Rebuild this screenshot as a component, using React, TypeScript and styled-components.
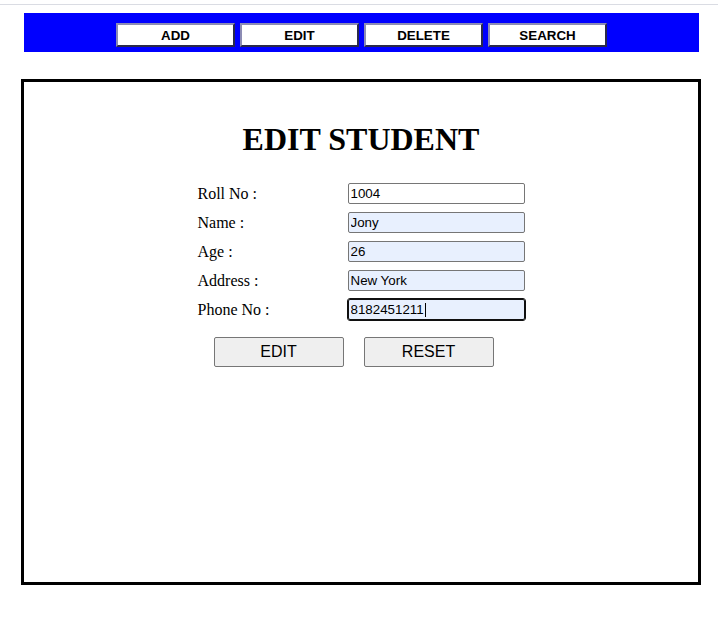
import React from "react";
import styled, { createGlobalStyle } from "styled-components";

const Global = createGlobalStyle`
  html, body { margin: 0; padding: 0; background: #ffffff; }
  body { font-family: "Liberation Serif", "Times New Roman", serif; }
`;

const Page = styled.div`
  display: flex;
  flex-direction: column;
  width: 718px;
`;

const TopRule = styled.div`
  margin-top: 4px;
  height: 1px;
  background: #dadce3;
`;

const NavBar = styled.nav`
  margin: 8px 0 0 24px;
  width: 675px;
  height: 39px;
  background: #0000ff;
  display: flex;
  align-items: flex-start;
  justify-content: center;
  gap: 5px;
  padding-top: 10px;
  box-sizing: border-box;
`;

const NavButton = styled.button`
  width: 119px;
  height: 24px;
  box-sizing: border-box;
  background: #ffffff;
  border-style: solid;
  border-width: 2px;
  border-color: #8c8cb4 #2a2a4a #2a2a4a #8c8cb4;
  font-family: "Liberation Sans", Arial, sans-serif;
  font-weight: bold;
  font-size: 13.33px;
  color: #000;
  padding: 0;
  margin: 0;
`;

const Card = styled.section`
  margin: 27px 0 0 21px;
  width: 680px;
  height: 506px;
  box-sizing: border-box;
  border: 3px solid #000;
  display: flex;
  flex-direction: column;
  align-items: center;
`;

const Title = styled.h1`
  margin: 39px 0 0 0;
  font-family: "Liberation Serif", "Times New Roman", serif;
  font-weight: bold;
  font-size: 32px;
  line-height: 37px;
  color: #000;
`;

const Form = styled.div`
  margin-top: 25px;
  width: 327px;
  display: flex;
  flex-direction: column;
  gap: 8px;
`;

const Row = styled.div`
  display: grid;
  grid-template-columns: 150px 177px;
  align-items: center;
  height: 21px;
`;

const Label = styled.label`
  font-family: "Liberation Serif", "Times New Roman", serif;
  font-size: 16px;
  color: #000;
`;

const FieldWrap = styled.div`
  position: relative;
  width: 177px;
  height: 21px;
`;

const Field = styled.input<{ $filled?: boolean; $focused?: boolean }>`
  width: 177px;
  height: 21px;
  box-sizing: border-box;
  padding: 1px 2px;
  margin: 0;
  border: 1px solid ${(p) => (p.$focused ? "#101010" : "#767676")};
  border-radius: 2px;
  background: ${(p) => (p.$filled ? "#e8f0fe" : "#ffffff")};
  font-family: "Liberation Sans", Arial, sans-serif;
  font-size: 13.33px;
  color: #000;
  outline: ${(p) => (p.$focused ? "1px solid #101010" : "none")};
  outline-offset: 0;
`;

const Caret = styled.span`
  position: absolute;
  left: 77px;
  top: 4px;
  width: 1px;
  height: 14px;
  background: #000;
`;

const Actions = styled.div`
  display: flex;
  gap: 20px;
  padding-left: 16px;
  margin-top: 9px;
`;

const ActionButton = styled.button`
  width: 130px;
  height: 30px;
  box-sizing: border-box;
  background: #efefef;
  border: 1px solid #767676;
  border-radius: 2px;
  font-family: "Liberation Sans", Arial, sans-serif;
  font-size: 16px;
  color: #000;
  padding: 0;
`;

const fields = [
  { label: "Roll No :", value: "1004", filled: false },
  { label: "Name :", value: "Jony", filled: true },
  { label: "Age :", value: "26", filled: true },
  { label: "Address :", value: "New York", filled: true },
  { label: "Phone No :", value: "8182451211", filled: true, focused: true },
];

export default function App() {
  return (
    <>
      <Global />
      <Page>
        <TopRule />
        <NavBar>
          <NavButton>ADD</NavButton>
          <NavButton>EDIT</NavButton>
          <NavButton>DELETE</NavButton>
          <NavButton>SEARCH</NavButton>
        </NavBar>
        <Card>
          <Title>EDIT STUDENT</Title>
          <Form>
            {fields.map((f) => (
              <Row key={f.label}>
                <Label>{f.label}</Label>
                <FieldWrap>
                  <Field
                    readOnly
                    value={f.value}
                    $filled={f.filled}
                    $focused={f.focused}
                  />
                  {f.focused && <Caret />}
                </FieldWrap>
              </Row>
            ))}
            <Actions>
              <ActionButton>EDIT</ActionButton>
              <ActionButton>RESET</ActionButton>
            </Actions>
          </Form>
        </Card>
      </Page>
    </>
  );
}
